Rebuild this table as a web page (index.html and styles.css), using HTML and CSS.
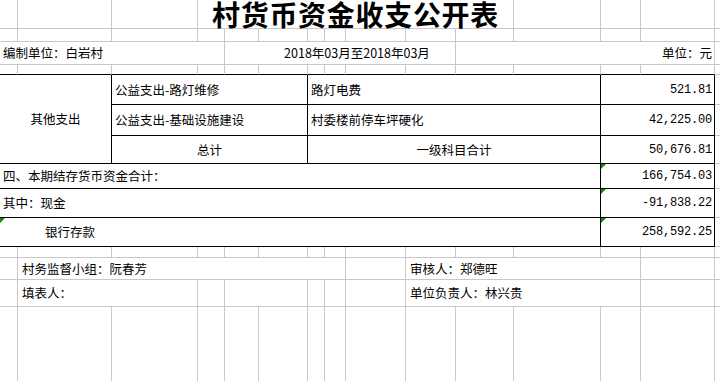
FILE: index.html
```html
<!DOCTYPE html>
<html lang="zh-CN">
<head>
<meta charset="utf-8">
<title>村货币资金收支公开表</title>
<link rel="stylesheet" href="styles.css">
</head>
<body>
<div class="sheet">
  <!-- row 1: title -->
  <div class="c"></div>
  <div class="c"></div>
  <div class="c"></div>
  <div class="c title s4-12"><span class="title-text">村货币资金收支公开表</span></div>
  <div class="c"></div>
  <div class="c"></div>
  <div class="c"></div>
  <div class="c last"></div>

  <!-- row 2 -->
  <div class="c"></div><div class="c"></div><div class="c"></div><div class="c"></div><div class="c"></div>
  <div class="c"></div><div class="c"></div><div class="c"></div><div class="c"></div><div class="c"></div>
  <div class="c"></div><div class="c"></div><div class="c"></div><div class="c"></div><div class="c last"></div>

  <!-- row 3 -->
  <div class="c txt s1-5">编制单位：白岩村</div>
  <div class="c txt s5-11 date">2018年03月至2018年03月</div>
  <div class="c txt s11-15 right">单位：元</div>
  <div class="c last"></div>

  <!-- row 4 -->
  <div class="c bb"></div><div class="c bb"></div><div class="c bb"></div><div class="c bb"></div><div class="c bb"></div>
  <div class="c bb"></div><div class="c bb"></div><div class="c bb"></div><div class="c bb"></div><div class="c bb"></div>
  <div class="c bb"></div><div class="c bb"></div><div class="c bb"></div><div class="c bb"></div><div class="c last"></div>

  <!-- table -->
  <div class="t txt center s1-3 span3">其他支出</div>
  <div class="t txt s3-7">公益支出-路灯维修</div>
  <div class="t txt s7-13">路灯电费</div>
  <div class="t num s13-15">521.81</div>
  <div class="c last"></div>

  <div class="t txt s3-7">公益支出-基础设施建设</div>
  <div class="t txt s7-13">村委楼前停车坪硬化</div>
  <div class="t num s13-15">42,225.00</div>
  <div class="c last"></div>

  <div class="t txt center s3-7">总计</div>
  <div class="t txt center s7-13">一级科目合计</div>
  <div class="t num s13-15">50,676.81</div>
  <div class="c last"></div>

  <div class="t txt s1-13">四、本期结存货币资金合计：</div>
  <div class="t num s13-15 flag">166,754.03</div>
  <div class="c last"></div>

  <div class="t txt s1-13">其中：现金</div>
  <div class="t num s13-15 flag">-91,838.22</div>
  <div class="c last"></div>

  <div class="t txt s1-13 flag indent">银行存款</div>
  <div class="t num s13-15 flag">258,592.25</div>
  <div class="c last"></div>

  <!-- row 11 -->
  <div class="c"></div><div class="c"></div><div class="c"></div><div class="c"></div><div class="c"></div>
  <div class="c"></div><div class="c"></div><div class="c"></div><div class="c"></div><div class="c"></div>
  <div class="c"></div><div class="c"></div><div class="c"></div><div class="c"></div><div class="c last"></div>

  <!-- row 12 -->
  <div class="c"></div>
  <div class="c txt foot s2-9">村务监督小组：阮春芳</div>
  <div class="c"></div>
  <div class="c txt foot s10-14">审核人：郑德旺</div>
  <div class="c"></div>
  <div class="c last"></div>

  <!-- row 13 -->
  <div class="c"></div>
  <div class="c txt foot s2-4">填表人：</div>
  <div class="c"></div>
  <div class="c s5-7"></div>
  <div class="c"></div>
  <div class="c"></div>
  <div class="c"></div>
  <div class="c txt foot s10-14">单位负责人：林兴贵</div>
  <div class="c"></div>
  <div class="c last"></div>

  <!-- row 14 -->
  <div class="c nb"></div><div class="c nb"></div><div class="c nb"></div><div class="c nb"></div><div class="c nb"></div>
  <div class="c nb"></div><div class="c nb"></div><div class="c nb"></div><div class="c nb"></div><div class="c nb"></div>
  <div class="c nb"></div><div class="c nb"></div><div class="c nb"></div><div class="c nb"></div><div class="c nb last"></div>
</div>
</body>
</html>
```

FILE: styles.css
```css
html, body {
  margin: 0;
  padding: 0;
  background: #ffffff;
}

body {
  width: 720px;
  height: 381px;
  overflow: hidden;
  font-family: "Noto Sans CJK SC", "Liberation Sans", sans-serif;
  font-size: 12.5px;
  color: #000000;
}

.sheet {
  display: grid;
  grid-template-columns: 18px 94px 86px 27px 34px 49px 17px 21px 60px 50px 58px 87px 40px 74px 5px;
  grid-template-rows: 29px 13px 23px 10px 30px 31px 28px 25px 29px 29px 11px 22px 27px 80px;
  width: 720px;
}

.c {
  box-sizing: border-box;
  border-right: 1px solid #c8c8c8;
  border-bottom: 1px solid #c8c8c8;
  min-width: 0;
}

.c.last {
  border-right: none;
}

.c.bb {
  border-bottom: 1px solid #000000;
}

.c.nb {
  border-bottom: none;
}

.t {
  box-sizing: border-box;
  border-right: 1px solid #000000;
  border-bottom: 1px solid #000000;
  min-width: 0;
  position: relative;
}

.txt {
  display: flex;
  align-items: center;
  padding-left: 3px;
  white-space: nowrap;
  line-height: 14px;
}

.center {
  justify-content: center;
  padding-left: 0;
}

.right {
  justify-content: flex-end;
  padding-right: 2px;
}

.date {
  justify-content: center;
  padding-left: 34px;
}

.indent {
  padding-left: 45px;
}

.foot {
  padding-left: 4px;
}

.num {
  display: flex;
  align-items: center;
  justify-content: flex-end;
  padding-right: 2px;
  font-family: "Liberation Mono", "DejaVu Sans Mono", monospace;
  font-size: 12px;
  letter-spacing: -0.2px;
  line-height: 14px;
}

.flag::before {
  content: "";
  position: absolute;
  left: 0;
  top: 0;
  width: 0;
  height: 0;
  border-top: 5px solid #0b8a0b;
  border-right: 5px solid transparent;
}

.title {
  display: flex;
  align-items: center;
  justify-content: center;
  border-right: 1px solid #c8c8c8;
  white-space: nowrap;
}

.title-text {
  display: block;
  font-size: 28px;
  font-weight: 700;
  letter-spacing: 0.7px;
  line-height: 27px;
  height: 27px;
  padding-top: 1px;
}

.s4-12 { grid-column: 4 / 12; }
.s1-5 { grid-column: 1 / 5; }
.s5-11 { grid-column: 5 / 11; }
.s11-15 { grid-column: 11 / 15; }
.s1-3 { grid-column: 1 / 3; }
.span3 { grid-row: span 3; }
.s3-7 { grid-column: 3 / 7; }
.s7-13 { grid-column: 7 / 13; }
.s13-15 { grid-column: 13 / 15; }
.s1-13 { grid-column: 1 / 13; }
.s2-9 { grid-column: 2 / 9; }
.s10-14 { grid-column: 10 / 14; }
.s2-4 { grid-column: 2 / 4; }
.s5-7 { grid-column: 5 / 7; }
```
